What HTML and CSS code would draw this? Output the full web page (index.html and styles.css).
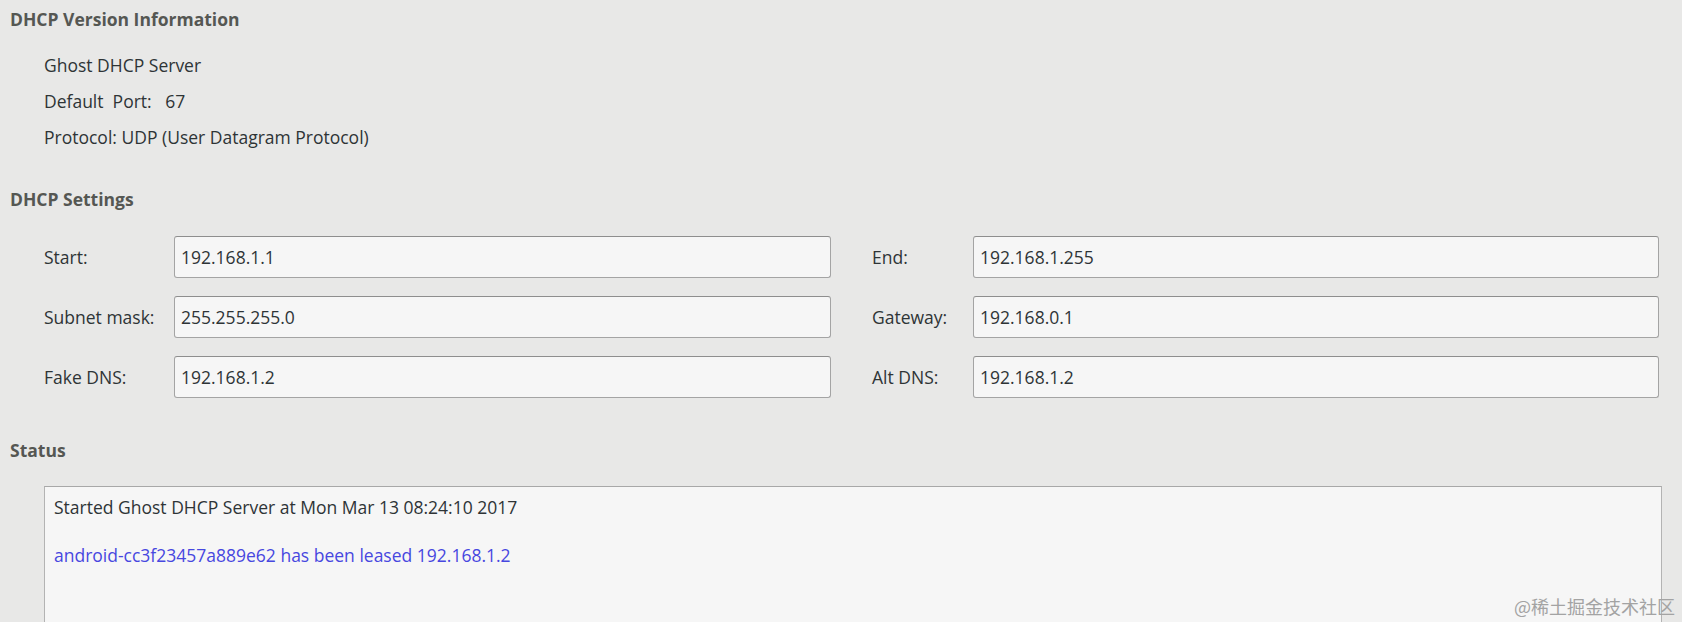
FILE: index.html
```html
<!DOCTYPE html>
<html lang="en">
<head>
<meta charset="utf-8">
<title>Ghost DHCP Server</title>
<link rel="stylesheet" href="styles.css">
</head>
<body>
<div class="page">
  <h2 class="section-title first">DHCP Version Information</h2>
  <div class="info">
    <div class="info-line">Ghost DHCP Server</div>
    <div class="info-line">Default&nbsp; Port:&nbsp;&nbsp; 67</div>
    <div class="info-line">Protocol: UDP (User Datagram Protocol)</div>
  </div>

  <h2 class="section-title settings-title">DHCP Settings</h2>
  <div class="settings-grid">
    <label class="field-label">Start:</label>
    <input class="field-input" type="text" value="192.168.1.1">
    <label class="field-label right">End:</label>
    <input class="field-input" type="text" value="192.168.1.255">

    <label class="field-label">Subnet mask:</label>
    <input class="field-input" type="text" value="255.255.255.0">
    <label class="field-label right">Gateway:</label>
    <input class="field-input" type="text" value="192.168.0.1">

    <label class="field-label">Fake DNS:</label>
    <input class="field-input" type="text" value="192.168.1.2">
    <label class="field-label right">Alt DNS:</label>
    <input class="field-input" type="text" value="192.168.1.2">
  </div>

  <h2 class="section-title status-title">Status</h2>
  <div class="status-box">
    <p class="status-line">Started Ghost DHCP Server at Mon Mar 13 08:24:10 2017</p>
    <p class="status-line lease">android-cc3f23457a889e62 has been leased 192.168.1.2</p>
  </div>
</div>
<div class="watermark">@稀土掘金技术社区</div>
</body>
</html>
```

FILE: styles.css
```css
html, body {
  margin: 0;
  padding: 0;
  height: 622px;
  overflow: hidden;
}

body {
  background: #e8e8e7;
  color: #2e3436;
  font-family: "Open Sans", "Noto Sans", sans-serif;
  font-size: 17.5px;
  position: relative;
}

.page {
  display: flex;
  flex-direction: column;
}

.section-title {
  margin: 0;
  padding-left: 10px;
  font-size: 17.5px;
  font-weight: 700;
  color: #555753;
  line-height: 24px;
}

.section-title.first {
  margin-top: 7px;
}

.info {
  padding-left: 44px;
  padding-top: 16px;
}

.info-line {
  line-height: 36px;
}

.settings-title {
  margin-top: 32px;
}

.settings-grid {
  display: grid;
  grid-template-columns: 130px 657px 142px 686px;
  grid-auto-rows: 42px;
  row-gap: 18px;
  margin-left: 44px;
  margin-top: 25px;
  align-items: center;
}

.field-label {
  line-height: 42px;
}

.field-label.right {
  padding-left: 41px;
}

.field-input {
  box-sizing: border-box;
  height: 42px;
  width: 100%;
  margin: 0;
  padding: 0 6px;
  background: #f6f6f6;
  border: 1px solid #a4a4a4;
  border-top-color: #8e8e8e;
  border-radius: 3px;
  color: #2e3436;
  font: inherit;
  outline: none;
}

.status-title {
  margin-top: 40px;
}

.status-box {
  box-sizing: border-box;
  margin-left: 44px;
  margin-top: 24px;
  width: 1618px;
  height: 200px;
  background: #f6f6f6;
  border: 1px solid #b3b3b3;
  border-top-color: #a8a8a8;
  padding: 5px 9px;
}

.status-line {
  margin: 0;
  line-height: 30px;
}

.status-line.lease {
  margin-top: 18px;
  color: #4747e0;
}

.watermark {
  position: absolute;
  right: 7px;
  bottom: 3px;
  font-family: "Noto Sans CJK SC", sans-serif;
  font-size: 18px;
  line-height: 26px;
  color: #a3a3a3;
}
```
